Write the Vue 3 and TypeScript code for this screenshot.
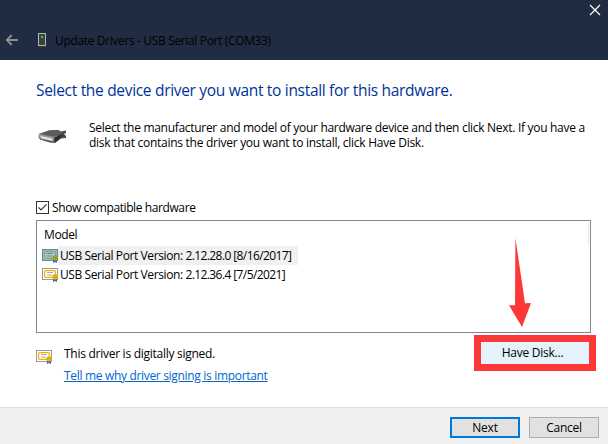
<script setup lang="ts">
import { ref } from 'vue'

interface Driver {
  id: number
  name: string
  version: string
}

const drivers: Driver[] = [
  { id: 1, name: 'USB Serial Port Version: ', version: '2.12.28.0 [8/16/2017]' },
  { id: 2, name: 'USB Serial Port Version: ', version: '2.12.36.4 [7/5/2021]' },
]
const selected = ref(1)
const compatible = ref(true)
</script>

<template>
  <div class="window">
    <header class="titlebar">
      <svg class="back" width="14" height="12" viewBox="0 0 14 12">
        <path d="M13 6H1.8M6.7 1L1.8 6l4.9 5" fill="none" stroke="#8f8f91" stroke-width="1.8" />
      </svg>
      <svg class="device" width="8" height="15" viewBox="0 0 8 15">
        <rect x="0.5" y="0.5" width="7" height="12" fill="#3f3f3f" stroke="#b4b4b4" />
        <rect x="3" y="3" width="2" height="2" fill="#00f020" />
        <rect x="0" y="13" width="8" height="2" fill="#34373c" />
      </svg>
      <span class="title">Update Drivers - USB Serial Port (COM33)</span>
      <button class="close" aria-label="Close">
        <svg width="12" height="12" viewBox="0 0 12 12">
          <path d="M1 1l10 10M11 1L1 11" fill="none" stroke="#fff" stroke-width="1.2" />
        </svg>
      </button>
    </header>

    <main class="content">
      <h1>Select the device driver you want to install for this hardware.</h1>

      <section class="intro">
        <svg class="port" width="29" height="15" viewBox="0 0 29 15">
          <path d="M1 5L11 1.5L20 1L23 2.4L28 1.5V4L26 5L28 7V9L23 9.5L17 14L12 13.5L2 10.5L0.5 8Z" fill="#4a4a4a" />
          <path d="M2 4.8L11 1.6L20 1.3L25 4L17 7.6Z" fill="#5c5c5c" />
          <path d="M1 5.2L16 8.3L15.5 12.7L3 10L1 8Z" fill="#a2a2a2" />
          <path d="M2 7L14 9.8V11.5L4 9.3Z" fill="#eeeeee" />
          <path d="M17 8L26 5L22 9L17 13.5Z" fill="#292929" />
          <path d="M1 5L16 8.1L19 7" fill="none" stroke="#8d8d8d" stroke-width="0.8" />
        </svg>
        <p>
          <span class="line-a">Select the manufacturer and model of your hardware device and then click Next. If you have a</span>
          <span class="line-b">disk that contains the driver you want to install, click Have Disk.</span>
        </p>
      </section>

      <div class="compat" @click="compatible = !compatible">
        <svg width="13" height="13" viewBox="0 0 13 13">
          <rect x="0.5" y="0.5" width="12" height="12" fill="#fff" stroke="#333" />
          <path v-if="compatible" d="M2.5 6.3L5 8.9L10.5 3.4" fill="none" stroke="#333" stroke-width="1.2" />
        </svg>
        <span>Show compatible hardware</span>
      </div>

      <section class="list">
        <div class="column">Model</div>
        <div
          v-for="driver in drivers"
          :key="driver.id"
          class="row"
          :class="{ active: driver.id === selected }"
          @click="selected = driver.id"
        >
          <svg class="cert" width="16" height="14" viewBox="0 0 16 14">
            <rect class="paper" x="0.5" y="0.5" width="15" height="11" />
            <rect class="frame" x="2.6" y="2.6" width="10.8" height="6.8" rx="1.2" />
            <path class="lines" d="M5 4.5h6M5 7h5" />
            <path d="M11 10h4v4l-2-1l-2 1z" fill="#1976c8" />
            <circle class="seal" cx="13" cy="9" r="2.7" />
          </svg>
          <span class="label">{{ driver.name }}<span class="version">{{ driver.version }}</span></span>
        </div>
        <i class="divider"></i>
      </section>

      <section class="signing">
        <svg class="cert" width="16" height="14" viewBox="0 0 16 14">
          <rect class="paper" x="0.5" y="0.5" width="15" height="11" />
          <rect class="frame" x="2.6" y="2.6" width="10.8" height="6.8" rx="1.2" />
          <path class="lines" d="M5 4.5h6M5 7h5" />
          <path d="M11 10h4v4l-2-1l-2 1z" fill="#1976c8" />
          <circle class="seal" cx="13" cy="9" r="2.7" />
        </svg>
        <div class="messages">
          <span class="signed">This driver is digitally signed.</span>
          <a class="link">Tell me why driver signing is important</a>
        </div>
        <button class="disk"><span>Have Disk...</span></button>
      </section>
    </main>

    <footer class="actions">
      <button class="next"><span>Next</span></button>
      <button class="cancel"><span>Cancel</span></button>
    </footer>

    <svg class="arrow" width="24" height="90" viewBox="0 0 24 90">
      <path d="M6.4 0L16 65.2L22 65L13 89L0 67.3H6Z" fill="#fc3737" />
    </svg>
  </div>
</template>

<style>
body {
  margin: 0;
}
</style>

<style scoped>
.window {
  position: relative;
  display: flex;
  flex-direction: column;
  width: 608px;
  height: 444px;
  overflow: hidden;
  background: #fff;
  color: #000;
  font: 12px/15px "Open Sans", "Noto Sans", sans-serif;
  white-space: nowrap;
}
button {
  display: flex;
  align-items: center;
  justify-content: center;
  box-sizing: border-box;
  margin: 0;
  padding: 0;
  border: 0;
  font: inherit;
  color: inherit;
}
svg {
  display: block;
  flex: none;
}
.titlebar {
  display: flex;
  box-sizing: border-box;
  height: 60px;
  flex: none;
  padding-left: 5px;
  background: #202c42;
}
.back {
  margin-top: 34px;
}
.device {
  margin: 33px 0 0 19px;
}
.title {
  margin: 33px 0 0 9px;
  letter-spacing: -0.35px;
}
.close {
  align-self: flex-start;
  margin: 4px 7px 0 auto;
  background: none;
}
.content {
  display: flex;
  flex-direction: column;
  height: 347px;
  flex: none;
  padding: 0 17px 0 36px;
  box-sizing: border-box;
}
h1 {
  margin: 19px 0 0;
  font-size: 15.5px;
  line-height: 22px;
  font-weight: 400;
  letter-spacing: -0.31px;
  color: #003399;
}
.intro {
  display: flex;
  margin-top: 19px;
}
.port {
  margin: 9px 0 0 2px;
}
.intro p {
  margin: 0 0 0 22px;
}
.line-a,
.line-b {
  display: block;
  letter-spacing: -0.3px;
}
.line-b {
  letter-spacing: -0.27px;
}
.compat {
  display: flex;
  align-items: center;
  gap: 3px;
  margin-top: 50px;
  height: 15px;
  letter-spacing: -0.4px;
}
.list {
  position: relative;
  box-sizing: border-box;
  height: 113px;
  margin-top: 5px;
  padding: 5px 0 0 5px;
  border: 1px solid #828790;
}
.column {
  height: 20px;
  line-height: 17px;
  padding-left: 2px;
  letter-spacing: -0.4px;
}
.row {
  display: flex;
  align-items: center;
  height: 19px;
}
.label {
  height: 19px;
  line-height: 19px;
  padding-left: 2px;
  letter-spacing: -0.4px;
  white-space: pre;
}
.version {
  letter-spacing: -0.59px;
}
.active .label {
  padding-right: 7px;
  background: #f0f0f0;
}
.divider {
  position: absolute;
  top: 1px;
  right: 1px;
  width: 1px;
  height: 24px;
  background: #e5e5e5;
}
.paper {
  fill: #fff;
  stroke: #9a9a9a;
}
.frame {
  fill: #fff;
  stroke: #f1b500;
  stroke-width: 1.3;
}
.lines {
  fill: none;
  stroke: #a9a9a9;
}
.seal {
  fill: #e7ac08;
}
.active .paper {
  fill: #92bddd;
  stroke: #5d8bad;
}
.active .frame {
  fill: #a5cae3;
  stroke: #a5a336;
}
.active .lines {
  stroke: #6687a0;
}
.active .seal {
  fill: #a59b29;
}
.signing {
  display: flex;
  margin-top: 2px;
}
.signing .cert {
  margin-top: 15px;
}
.messages {
  display: flex;
  flex-direction: column;
  gap: 7px;
  margin: 11px 0 0 12px;
}
.signed {
  letter-spacing: -0.27px;
}
.link {
  letter-spacing: -0.32px;
  color: #0066cc;
  text-decoration: underline;
}
.disk {
  width: 122px;
  height: 36px;
  margin: 0 -5px 0 auto;
  padding: 0 5px 1px 0;
  border: 7px solid #fc3737;
  background: #e5f1fb;
}
.actions {
  display: flex;
  box-sizing: border-box;
  height: 37px;
  flex: none;
  justify-content: flex-end;
  gap: 9px;
  padding: 9px 9px 0 0;
  border-top: 1px solid #dfdfdf;
  background: #f0f0f0;
}
.actions button {
  width: 70px;
  height: 21px;
  border: 1px solid #adadad;
  background: #e1e1e1;
}
.actions .next {
  border: 2px solid #0078d7;
}
.disk span,
.actions span {
  letter-spacing: -0.25px;
}
.arrow {
  position: absolute;
  left: 509px;
  top: 238px;
}
</style>
